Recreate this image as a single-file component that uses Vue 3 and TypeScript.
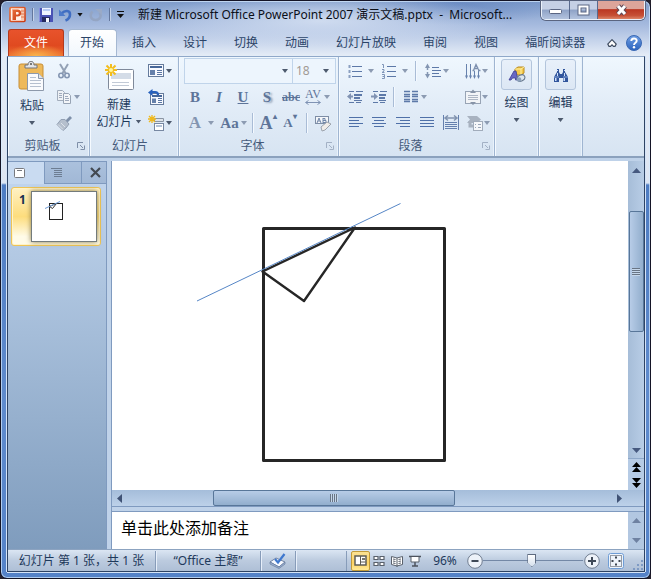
<script setup lang="ts">
import { ref } from 'vue'

const tabs: string[] = ['开始', '插入', '设计', '切换', '动画', '幻灯片放映', '审阅', '视图', '福昕阅读器']
const activeTab = ref('开始')
const zoom = ref(96)
const slider = ref(39)
</script>

<template>
  <div class="window">
    <header class="titlebar">
      <div class="quick">
        <svg class="app-logo" width="17" height="17" viewBox="0 0 17 17">
          <defs>
            <linearGradient id="logoG" x1="0" y1="0" x2="1" y2="1">
              <stop offset="0" stop-color="#e8703c" /><stop offset="1" stop-color="#c93a12" />
            </linearGradient>
          </defs>
          <rect x="1" y="1.500" width="15" height="14" rx="1" fill="#fff1e8" stroke="url(#logoG)" stroke-width="1.600" />
          <path d="M12 3h3v11h-3z" fill="#f7c9b2" />
          <path d="M12 5h3M12 8h3M12 11h3" stroke="#e07a50" />
          <path fill-rule="evenodd" fill="url(#logoG)" d="M3 3.500h5.500c5 0 5 7 0 7H7v3.500H3.500V4.500zM7 6v2.500h1.500c1.700 0 1.700-2.500 0-2.500z" />
        </svg>
        <i class="vbar"></i>
        <button class="plain" aria-label="保存">
          <svg width="14" height="14" viewBox="0 0 14 14">
            <path d="M0 0h14v14H1L0 13z" fill="#4a52b5" />
            <path d="M3 0h9v7H3z" fill="#eef3ff" /><path d="M4 1h7v2H4z" fill="#b8cbf4" />
            <path d="M3 9h8v5H3z" fill="#24285f" /><path d="M7 10h3v4H7z" fill="#f5f7ff" />
            <path d="M0 0h1v13H0z" fill="#8790df" />
          </svg>
        </button>
        <button class="plain undo" aria-label="撤消">
          <svg width="14" height="14" viewBox="0 0 14 14">
            <path d="M2.500 5.500C6 2 11 2 11 6.500c0 3-2 5-4.500 6" fill="none" stroke="#3f6dc2" stroke-width="2.600" />
            <path d="M0 1.500V8h6.500z" fill="#4c79ca" />
          </svg>
          <i class="caret black"></i>
        </button>
        <button class="plain redo" aria-label="重复" disabled>
          <svg width="14" height="14" viewBox="0 0 14 14">
            <path d="M3.500 3.500C0 7 2 12 6.500 12s6.500-4 4-7.500" fill="none" stroke="#94a5c3" stroke-width="2.500" />
            <path d="M6 1h7v6z" fill="#9aaac6" />
          </svg>
        </button>
        <i class="vbar"></i>
        <button class="plain" aria-label="自定义快速访问工具栏">
          <svg width="9" height="8" viewBox="0 0 9 8"><path d="M1 .5h7" stroke="#111" /><path d="M1 3h7L4.500 7z" fill="#111" /></svg>
        </button>
      </div>
      <h1>新建 Microsoft Office PowerPoint 2007 演示文稿.pptx&nbsp; -&nbsp; Microsoft...</h1>
      <div class="winbtns">
        <button aria-label="最小化"><svg width="13" height="12" viewBox="0 0 13 12"><rect x=".5" y="5.500" width="12" height="4" rx="1" fill="#fff" stroke="#5b6683" /></svg></button>
        <button aria-label="最大化"><svg width="13" height="12" viewBox="0 0 13 12"><rect x="2.500" y="2.500" width="8" height="7" fill="none" stroke="#5b6683" stroke-width="4" /><rect x="2.500" y="2.500" width="8" height="7" fill="none" stroke="#fff" stroke-width="2" /></svg></button>
        <button class="close" aria-label="关闭"><svg width="13" height="12" viewBox="0 0 13 12"><path d="M3 2l7 8M10 2l-7 8" stroke="#5d4654" stroke-width="5" /><path d="M3 2l7 8M10 2l-7 8" stroke="#fff" stroke-width="3" /></svg></button>
      </div>
    </header>

    <nav class="tabs">
      <button class="file">文件</button>
      <button v-for="t in tabs" :key="t" class="tab" :class="{ active: t === activeTab }" @click="activeTab = t">{{ t }}</button>
      <div class="tab-tools">
        <button class="plain" aria-label="功能区最小化">
          <svg width="10" height="8" viewBox="0 0 10 8"><path d="M5 .7L9.200 5 8 7.300H6.500L5 5.800 3.500 7.300H2L.8 5z" fill="#fff" stroke="#3f4c60" stroke-width="1.200" /></svg>
        </button>
        <button class="plain" aria-label="帮助">
          <svg width="16" height="16" viewBox="0 0 16 16">
            <defs><linearGradient id="helpG" x1="0" y1="0" x2="0" y2="1"><stop offset="0" stop-color="#6f9fe4" /><stop offset="1" stop-color="#2c63bd" /></linearGradient></defs>
            <circle cx="8" cy="8" r="7.500" fill="url(#helpG)" stroke="#3a69b4" />
            <path d="M5.300 6C5.300 2.600 10.700 2.700 10.700 5.800 10.700 7.800 8 7.600 8 10" fill="none" stroke="#fff" stroke-width="1.900" /><circle cx="8" cy="12.300" r="1.200" fill="#fff" />
          </svg>
        </button>
      </div>
    </nav>

    <main class="client">
      <section class="ribbon">
        <div class="group clipboard">
          <div class="content">
            <button class="big">
              <svg width="28" height="31" viewBox="0 0 28 31">
                <rect x="1" y="3" width="24" height="25" rx="2" fill="#eeb95a" stroke="#c78f37" />
                <path d="M7 7V4h3c0-5 6-5 6 0h3v3z" fill="#e3e5e8" stroke="#70757c" /><circle cx="13" cy="3" r="1" fill="#555" />
                <path d="M9.500 12.500h11l5 5v12h-16z" fill="#fafbfd" stroke="#8d99ab" /><path d="M20.500 12.500v5h5" fill="#dfe5ee" stroke="#8d99ab" />
                <path d="M12 16.500h6M12 19.500h11M12 22.500h11M12 25.500h11" stroke="#b6c0cf" />
              </svg>
              <span>粘贴</span><i class="caret"></i>
            </button>
            <div class="stack">
              <button class="split" aria-label="剪切"><svg width="16" height="16" viewBox="0 0 16 16"><path d="M4 1l6 10M12 1L6 11" stroke="#93a1b5" stroke-width="2" /><circle cx="5" cy="12.500" r="2.200" fill="none" stroke="#8496b2" stroke-width="1.600" /><circle cx="11" cy="12.500" r="2.200" fill="none" stroke="#8496b2" stroke-width="1.600" /></svg></button>
              <button class="split" aria-label="复制"><svg width="16" height="16" viewBox="0 0 16 16"><path d="M1.500 1.500h5l2 2v8h-7z" fill="#eef1f5" stroke="#a2adbc" /><path d="M7.500 4.500h5l2 2v8h-7z" fill="#f3f5f8" stroke="#98a4b5" /><path d="M3 4.500h3M3 6.500h3M3 8.500h3M9 7.500h3M9 9.500h4M9 11.500h4" stroke="#9faabc" /></svg><i class="caret dim"></i></button>
              <button class="split" aria-label="格式刷"><svg width="16" height="16" viewBox="0 0 16 16"><path d="M9 6l5-5 2 2-5 5z" fill="#7f90a9" /><path d="M5 4.500h4l4 4.500-3 4-3 2.500-6-6z" fill="#b5bfcd" stroke="#94a1b4" /><path d="M2 9.500l5 5M5 8l4 4" stroke="#dde3ea" /></svg></button>
            </div>
          </div>
          <footer><span>剪贴板</span><svg class="launch" width="8" height="8" viewBox="0 0 8 8"><path d="M.5 6V.5H6M3 3l3 3M7.500 3.500v4h-4" fill="none" stroke="#7e8fa8" /></svg></footer>
        </div>

        <div class="group slides">
          <div class="content">
            <button class="big">
              <svg width="31" height="31" viewBox="0 0 31 31">
                <rect x="4.500" y="7.500" width="25" height="20" rx="1" fill="#fff" stroke="#7f899a" /><path d="M7 11h20v6H7z" fill="#d4dce7" /><path d="M8 20.500h17M8 23.500h17" stroke="#c2cad6" />
                <path d="M7 2v12M1 8h12M2.500 3.500l9 9M11.500 3.500l-9 9" stroke="#f3bd1e" stroke-width="2" /><circle cx="7" cy="8" r="2" fill="#fff59b" />
              </svg>
              <span>新建</span><span class="with-caret">幻灯片 <i class="caret"></i></span>
            </button>
            <div class="stack">
              <button class="split" aria-label="版式"><svg width="16" height="16" viewBox="0 0 16 16"><rect x=".5" y="1.500" width="15" height="12" fill="#f8faff" stroke="#657b9c" /><path d="M2 4h12" stroke="#476799" stroke-width="2" /><path d="M2 7h5v5H2z" fill="#6580aa" /><path d="M9 7.500h5M9 9.500h5M9 11.500h5" stroke="#5a76a3" /></svg><i class="caret"></i></button>
              <button class="split" aria-label="重设"><svg width="16" height="16" viewBox="0 0 16 16"><rect x="2.500" y="4.500" width="13" height="11" fill="#f8faff" stroke="#657b9c" /><path d="M4 7h10" stroke="#476799" stroke-width="2" /><path d="M4 9.500h4V14H4z" fill="#6580aa" /><path d="M10 9.500h4M10 11.500h4M10 13.500h4" stroke="#5a76a3" /><path d="M3 3h4c2 0 3 1 3 3" fill="none" stroke="#2861bd" stroke-width="2.200" /><path d="M0 3.500L4.500 0v7z" fill="#2861bd" /></svg></button>
              <button class="split" aria-label="节"><svg width="16" height="16" viewBox="0 0 16 16"><path d="M6.500 3.500h9v3h-9z" fill="#dfe4ea" stroke="#8a95a4" /><rect x="6.500" y="8.500" width="9" height="7" fill="#fff" stroke="#7788a2" /><path d="M8 10h6v2H8z" fill="#b3c2d8" /><path d="M4 0v8M0 4h8M1 1l6 6M7 1L1 7" stroke="#f0b91c" stroke-width="1.300" /></svg><i class="caret"></i></button>
            </div>
          </div>
          <footer><span>幻灯片</span></footer>
        </div>

        <div class="group font">
          <div class="content rows">
            <div class="row combos">
              <label class="combo name"><select aria-label="字体名称"><option></option></select><i class="caret"></i></label>
              <label class="combo"><select aria-label="字号"><option>18</option></select><i class="caret"></i></label>
            </div>
            <div class="row">
              <button class="letter b">B</button><button class="letter i">I</button><button class="letter u">U</button><button class="letter s">S</button><button class="letter strike">abc</button>
              <button class="letter av" aria-label="字符间距"><span>AV</span><svg width="16" height="5" viewBox="0 0 16 5"><path d="M1 2.500h14M3.500 .5l-3 2 3 2M12.500 .5l3 2-3 2" fill="none" stroke="#7f93b4" /></svg></button><i class="caret dim"></i>
            </div>
            <div class="row">
              <button class="letter a">A</button><i class="caret dim wide"></i>
              <button class="letter aa">Aa</button><i class="caret dim"></i>
              <i class="sep"></i>
              <button class="letter grow">A<sup>▴</sup></button><button class="letter shrink">A<sup>▾</sup></button>
              <i class="sep"></i>
              <button class="plain clear" aria-label="清除所有格式"><svg width="17" height="17" viewBox="0 0 17 17"><rect x=".5" y="1.500" width="13" height="7" fill="#f5f7fa" stroke="#7e8ea6" /><path d="M2 8l2-5 2 5M3 6h2M8 3v5M8 3.500h2v2H8h3v2H8" fill="none" stroke="#7187a9" /><path d="M6 12l6-5 4 2-6 6-3 1z" fill="#f1ede9" stroke="#9ba2ac" /></svg></button>
            </div>
          </div>
          <footer><span>字体</span><svg class="launch" width="8" height="8" viewBox="0 0 8 8"><path d="M.5 6V.5H6M3 3l3 3M7.500 3.500v4h-4" fill="none" stroke="#a3b1c5" /></svg></footer>
        </div>

        <div class="group para">
          <div class="content rows">
            <div class="row">
              <button class="split wide" aria-label="项目符号"><svg width="16" height="16" viewBox="0 0 16 16"><path d="M5 3.500h10M5 8.500h10M5 13.500h10" stroke="#5d79a8" /><path d="M1.500 2h2v3h-2zM1.500 7h2v3h-2zM1.500 12h2v3h-2z" fill="#8ba0c1" /></svg><i class="caret dim"></i></button>
              <button class="split wide" aria-label="编号"><svg width="16" height="16" viewBox="0 0 16 16"><path d="M6 3.500h9M6 8.500h9M6 13.500h9" stroke="#5d79a8" /><path d="M1 1.500h1.500V5M1 6.500h2v1.500l-2 1.500h2.500M1 11.500h2.500v4H1M1.500 13.500h2" fill="none" stroke="#7f95b8" /></svg><i class="caret dim"></i></button>
              <i class="sep"></i>
              <button class="split" aria-label="行距"><svg width="16" height="16" viewBox="0 0 16 16"><path d="M2.500 3v4M2.500 9v4" stroke="#8496b2" stroke-width="1.500" /><path d="M0 5l2.500-4.500L5 5zM0 11l2.500 4.500L5 11z" fill="#8496b2" /><path d="M7 4.500h7M7 7.500h9M7 10.500h7M7 13.500h9" stroke="#5d79a8" /></svg><i class="caret dim"></i></button>
              <button class="split end" aria-label="文字方向"><svg width="16" height="16" viewBox="0 0 16 16"><path d="M1.500 1v13M5.500 1v13M9.500 8v6M13.500 8v6" stroke="#6782ad" /><path d="M0 12.500h3L1.500 16zM4 12.500h3L5.500 16zM8 12.500h3L9.500 16zM12 12.500h3L13.500 16z" fill="#6782ad" /><path d="M8.500 7.500l2.500-6 3 6M9.500 5.500h4M7.500 7.500h2M13 7.500h2.500" fill="none" stroke="#7d90af" stroke-width="1.300" /></svg><i class="caret dim"></i></button>
            </div>
            <div class="row icons">
              <button class="plain" aria-label="降低列表级别"><svg width="16" height="16" viewBox="0 0 16 16"><path d="M2 2.500h5M9 2.500h7M7 5.500h8M7 6.500h8M7 9.500h6M7 8.500h6M7 11.500h8M2 13.500h5M9 13.500h5" stroke="#5d79a8" /><path d="M0 7.500L4 4v7z" fill="#8093b3" /><path d="M3 7.500h3" stroke="#8093b3" stroke-width="2" /></svg></button>
              <button class="plain" aria-label="提高列表级别"><svg width="16" height="16" viewBox="0 0 16 16"><path d="M2 2.500h5M9 2.500h7M8 5.500h7M8 6.500h7M8 8.500h6M8 9.500h6M8 11.500h7M2 13.500h5M9 13.500h5" stroke="#5d79a8" /><path d="M7 7.500L3 4v7z" fill="#8093b3" /><path d="M0 7.500h4" stroke="#8093b3" stroke-width="2" /></svg></button>
              <i class="sep near"></i>
              <button class="split" aria-label="分栏"><svg width="16" height="16" viewBox="0 0 16 16"><path d="M1 2.500h6M1 5.500h6M1 7.500h6M1 10.500h6M1 12.500h6M9 2.500h6M9 5.500h6M9 7.500h6M9 10.500h6M9 12.500h6" stroke="#5d79a8" stroke-width="1.300" /></svg><i class="caret dim"></i></button>
              <button class="split end" aria-label="对齐文本"><svg width="16" height="16" viewBox="0 0 16 16"><rect x=".5" y="2.500" width="15" height="12" fill="#f2f4f7" stroke="#98a4b5" /><path d="M3 6.500h10M3 8.500h10M3 10.500h10" stroke="#adb6c4" /><path d="M5 4L8 .5 11 4zM5 13l3 3 3-3z" fill="#8794a8" /></svg><i class="caret dim"></i></button>
            </div>
            <div class="row icons">
              <button class="plain" aria-label="左对齐"><svg width="16" height="16" viewBox="0 0 16 16"><path d="M2 2.500h14M2 5.500h10M2 8.500h14M2 11.500h10" stroke="#4f70a8" /></svg></button>
              <button class="plain" aria-label="居中"><svg width="16" height="16" viewBox="0 0 16 16"><path d="M1 2.500h14M3 5.500h10M1 8.500h14M3 11.500h10" stroke="#4f70a8" /></svg></button>
              <button class="plain" aria-label="右对齐"><svg width="16" height="16" viewBox="0 0 16 16"><path d="M1 2.500h14M5 5.500h10M1 8.500h14M5 11.500h10" stroke="#4f70a8" /></svg></button>
              <button class="plain" aria-label="两端对齐"><svg width="16" height="16" viewBox="0 0 16 16"><path d="M1 2.500h14M1 5.500h14M1 8.500h14M1 11.500h14" stroke="#4f70a8" /></svg></button>
              <button class="plain" aria-label="分散对齐"><svg width="16" height="16" viewBox="0 0 16 16"><path d="M.5 0v15M15.500 0v15M2 7.500h12M2 9.500h12M2 11.500h12M2 13.500h12" stroke="#6580ae" /><path d="M2 3h12M5 .5L2 3l3 2.500M11 .5L14 3l-3 2.500" fill="none" stroke="#8294b0" stroke-width="1.500" /></svg></button>
              <button class="split end" aria-label="转换为 SmartArt"><svg width="16" height="16" viewBox="0 0 16 16"><path d="M0 1h10l4 3.500L10 8H0l3-3.500z" fill="#a8b2c0" /><path d="M3 6v5h3" stroke="#a8b2c0" stroke-width="3" fill="none" /><rect x="6.500" y="6.500" width="9" height="9" fill="#f5f7fa" stroke="#a1acbb" /><path d="M8 9.500h1M11 9.500h3M8 12.500h1M11 12.500h3" stroke="#9aa7ba" /></svg><i class="caret dim"></i></button>
            </div>
          </div>
          <footer><span>段落</span><svg class="launch" width="8" height="8" viewBox="0 0 8 8"><path d="M.5 6V.5H6M3 3l3 3M7.500 3.500v4h-4" fill="none" stroke="#a3b1c5" /></svg></footer>
        </div>

        <div class="group small">
          <button class="big">
            <b class="tile"><svg width="18" height="18" viewBox="0 0 18 18"><path d="M7 3l3-2h6v6l-3 2H7z" fill="#f4c94a" stroke="#b98b22" /><path d="M7 3h6v6M13 3l3-2" fill="none" stroke="#fff0a6" /><path d="M1 14L6 5h2l2 9H7.500v-2h-3L3 14z" fill="#6767c3" stroke="#3c3c93" stroke-width=".8" /><ellipse cx="13" cy="12" rx="4" ry="3" transform="rotate(-25 13 12)" fill="#dce6ef" stroke="#64768b" /><circle cx="11" cy="13.500" r="2.300" fill="#8ca1ba" /></svg></b>
            <span>绘图</span><i class="caret"></i>
          </button>
        </div>
        <div class="group small">
          <button class="big">
            <b class="tile"><svg width="18" height="18" viewBox="0 0 18 18"><path d="M5 3h2v3l1 2h2l1-2V3h2v3l3 5v5h-5v-4H7v4H2v-5l3-5z" fill="#31559c" /><path d="M3 12h1.500v3H3zM11.500 12H13v3h-1.500zM5 7h1v3H5zM12 7h1v3h-1zM5 4h1v1H5zM12 4h1v1h-1z" fill="#cfe0fa" /><path d="M2 11h5M11 11h5" stroke="#89a8dc" /></svg></b>
            <span>编辑</span><i class="caret"></i>
          </button>
        </div>
      </section>

      <section class="body">
        <aside class="outline">
          <div class="pane-tabs">
            <button class="pt on" aria-label="幻灯片"><svg width="12" height="10" viewBox="0 0 12 10"><rect x=".5" y=".5" width="10" height="9" rx="1" fill="#fff" stroke="#77797e" /><path d="M3 2.500h5" stroke="#77797e" /></svg></button>
            <button class="pt" aria-label="大纲"><svg width="12" height="10" viewBox="0 0 12 10"><path d="M0 .5h11M3 2.500h8M3 4.500h8M3 6.500h8M3 8.500h8" stroke="#6d7d92" /></svg></button>
            <button class="pt x" aria-label="关闭"><svg width="11" height="11" viewBox="0 0 11 11"><path d="M1 1l9 9M10 1l-9 9" stroke="#434952" stroke-width="2.200" /></svg></button>
          </div>
          <button class="thumb" aria-label="幻灯片 1">
            <b>1</b>
            <svg viewBox="0 0 66 51"><rect x=".5" y=".5" width="65" height="50" fill="#fff" stroke="#737b7c" /><rect x="18.500" y="12.500" width="13" height="16" fill="none" stroke="#222" /><path d="M18.500 15.500l7-3-4 5z" fill="none" stroke="#333" /><path d="M14 17.500l15-7" stroke="#6f9cd6" /></svg>
          </button>
        </aside>
        <div class="editor">
          <div class="stage">
            <svg class="slide" viewBox="112 161 516 329">
              <rect x="263.500" y="228.500" width="181" height="232" fill="none" stroke="#262626" stroke-width="3" stroke-linejoin="round" />
              <path d="M262.500 271.500L355 227.500 304 301z" fill="#fff" stroke="#262626" stroke-width="2.400" stroke-linejoin="round" />
              <path d="M197 301L400.500 203.500" stroke="#5686c6" />
            </svg>
            <div class="vscroll">
              <svg class="arrow" viewBox="0 0 9 5"><path d="M0 5l4.500-5L9 5z" /></svg>
              <div class="vtrack"><div class="vthumb"><i></i></div></div>
              <svg class="arrow" viewBox="0 0 9 5"><path d="M0 0h9L4.500 5z" /></svg>
              <div class="pager">
                <svg width="9" height="10" viewBox="0 0 9 10"><path d="M0 5l4.500-5L9 5zM0 10l4.500-5L9 10z" /></svg>
                <svg width="9" height="10" viewBox="0 0 9 10"><path d="M0 0h9L4.500 5zM0 5h9L4.500 10z" /></svg>
              </div>
            </div>
          </div>
          <div class="hscroll">
            <svg width="5" height="9" viewBox="0 0 5 9"><path d="M5 0v9L0 4.500z" fill="#3f5275" /></svg>
            <div class="htrack"><div class="hthumb"><i></i></div></div>
            <svg width="5" height="9" viewBox="0 0 5 9"><path d="M0 0v9l5-4.500z" fill="#3f5275" /></svg>
          </div>
          <div class="notes">
            <p>单击此处添加备注</p>
            <div class="nscroll">
              <svg class="arrow" viewBox="0 0 9 5"><path d="M0 5l4.500-5L9 5z" /></svg>
              <svg class="arrow" viewBox="0 0 9 5"><path d="M0 0h9L4.500 5z" /></svg>
            </div>
          </div>
        </div>
      </section>

      <footer class="status">
        <span class="cell count">幻灯片 第 1 张，共 1 张</span>
        <span class="cell theme">“Office 主题”</span>
        <span class="cell spell"><svg width="18" height="16" viewBox="0 0 18 16"><path d="M1 9l6-4 9 4-6 5z" fill="#f8faff" stroke="#7183a2" /><path d="M1 9v2l9 4.500 6-4.500V9l-6 5z" fill="#9eb3d3" stroke="#667b9e" stroke-width=".7" /><path d="M6 6l3 3.500L15.500 1" fill="none" stroke="#3f78ce" stroke-width="2.200" /></svg></span>
        <div class="views">
          <button class="on" aria-label="普通视图"><svg width="13" height="12" viewBox="0 0 13 12"><rect x="1" y="1" width="11" height="9" fill="#fff" stroke="#5e5d57" stroke-width="1.500" /><path d="M6.500 1v9M6.500 7h5" stroke="#5e5d57" /><path d="M8 3h3v2H8z" fill="#77766e" /></svg></button>
          <button aria-label="幻灯片浏览"><svg width="12" height="12" viewBox="0 0 12 12"><path d="M1 1.500h4v3H1zM7 1.500h4v3H7zM1 7.500h4v3H1zM7 7.500h4v3H7z" fill="#fff" stroke="#59606b" stroke-width="1.200" /></svg></button>
          <button aria-label="阅读视图"><svg width="12" height="12" viewBox="0 0 12 12"><path d="M.5 1.500L6 3l5.500-1.500v8L6 11 .5 9.500zM6 3v9" fill="#fff" stroke="#59606b" /><path d="M2 4l2.500.5M2 6l2.500.5M2 8l2.500.5M7.500 4.500L10 4M7.500 6.500L10 6M7.500 8.500L10 8" stroke="#59606b" /></svg></button>
          <button aria-label="幻灯片放映"><svg width="12" height="12" viewBox="0 0 12 12"><path d="M0 1.500h12M6 7v4M3 11h6" stroke="#4d535d" stroke-width="1.500" /><path d="M2 2v5h8V2" fill="#fff" stroke="#59606b" /></svg></button>
        </div>
        <output>{{ zoom }}%</output>
        <button class="round" aria-label="缩小"><svg width="16" height="16" viewBox="0 0 16 16"><circle cx="8" cy="8" r="7.300" fill="#edf2f9" stroke="#707d90" /><path d="M4.500 8h7" stroke="#3f4957" stroke-width="2" /></svg></button>
        <input v-model="slider" type="range" min="0" max="80" aria-label="显示比例" />
        <button class="round" aria-label="放大"><svg width="16" height="16" viewBox="0 0 16 16"><circle cx="8" cy="8" r="7.300" fill="#edf2f9" stroke="#707d90" /><path d="M4 8h8M8 4v8" stroke="#3f4957" stroke-width="2" /></svg></button>
        <button class="fit" aria-label="使幻灯片适应当前窗口"><svg width="16" height="16" viewBox="0 0 16 16"><rect x=".5" y=".5" width="15" height="15" rx="2" fill="#eef4fb" stroke="#6e9dd6" /><rect x="2.500" y="2.500" width="11" height="11" fill="none" stroke="#3d4550" stroke-dasharray="1 1" /><path d="M8 3v3M8 10v3M3 8h3M10 8h3M7 4.500h2M7 11.500h2M4.500 7v2M11.500 7v2" stroke="#3d4550" /></svg></button>
        <svg class="grip" width="12" height="12" viewBox="0 0 12 12"><path d="M9 1h2v2H9zM5 5h2v2H5zM9 5h2v2H9zM1 9h2v2H1zM5 9h2v2H5zM9 9h2v2H9z" fill="#7e9ac4" /></svg>
      </footer>
    </main>
  </div>
</template>

<style>
body { background: #25202c; }
</style>

<style scoped>
* { box-sizing: border-box; }
button { font: inherit; color: inherit; border: 0; background: none; padding: 0; }
svg { display: block; flex: none; }
i { display: block; flex: none; }

.window {
  display: flex; flex-direction: column; min-height: 100vh;
  padding: 0 5px 6px 6px; border: 1px solid #141426; border-radius: 7px;
  font: 12px/16px "Noto Sans", "Noto Sans CJK SC", sans-serif; color: #1e395b;
  background:
    radial-gradient(ellipse 190px 26px at 320px 20px, rgba(215, 226, 243, .85), transparent),
    radial-gradient(ellipse 110px 20px at 455px 4px, rgba(80, 118, 184, .45), transparent),
    linear-gradient(180deg, #7e9bca 0, #a9bde0 26px, #e3ebf6 54px, #dde5f2 182px, #4e7cc2 184px, #5f8bcd 400px, #5482c8 100%);
  box-shadow: inset 0 0 0 1px rgba(215, 235, 255, .7);
}

.titlebar { display: flex; align-items: flex-start; height: 27px; }
.quick { display: flex; align-items: center; gap: 6px; width: 131px; height: 27px; padding-left: 2px; flex: none; }
.quick .plain { flex: none; }
.undo { display: flex; align-items: center; gap: 4px; }
.vbar { width: 1px; height: 13px; background: #63779d; box-shadow: 1px 0 #c5d3e9; }
h1 { flex: 1; min-width: 0; margin: 0; font-size: 12px; line-height: 27px; font-weight: 400; color: #0b0f18; white-space: nowrap; overflow: hidden; text-overflow: clip; }
.winbtns { display: flex; flex: none; height: 19px; border: 1px solid #eaf1fb; border-top: 0; border-radius: 0 0 5px 5px; overflow: hidden; box-shadow: 0 0 0 1px #5a6580; }
.winbtns button { display: grid; place-items: center; width: 28px; border-right: 1px solid #596a8e; background: linear-gradient(#c5d0e5 0 45%, #8ea2c6 50%, #b3c3de); }
.winbtns .close { width: 46px; border: 0; background: linear-gradient(#dda59a 0 42%, #bb3722 48%, #c64f35 80%, #dc8568); }

.tabs { display: flex; align-items: flex-end; height: 28px; color: #2b4468; }
.file { flex: none; width: 56px; height: 27px; margin: 0 4px 0 1px; color: #fff; border: 1px solid #b4391d; border-bottom: 0; border-radius: 3px 3px 0 0; background: radial-gradient(ellipse 30px 12px at 50% 100%, #f9b44c, transparent), linear-gradient(#e8532c, #e04a20 60%, #ee7030); }
.tab { flex: none; height: 27px; padding: 0 13px 0 12px; border: 1px solid transparent; border-bottom: 0; white-space: nowrap; }
.tab.active { padding: 0 12px 0 11px; margin-right: 2px; border-color: #a5b8d2; border-radius: 4px 4px 0 0; background: linear-gradient(#fff, #f1f7fd); }
.tab-tools { display: flex; align-items: center; gap: 9px; height: 27px; margin-left: auto; padding-right: 3px; }

.client { flex: 1; display: flex; flex-direction: column; min-height: 0; border: 1px solid #2e4364; border-top-color: #8fa8c9; box-shadow: 0 1px #d5e4f8, -1px 0 #d5e4f8, 1px 0 #d5e4f8; background: #b9cce4; }

.ribbon { display: flex; height: 101px; flex: none; background: linear-gradient(#eff7fe, #e3edf8 45%, #d7e4f2); border-bottom: 2px solid #8ba1bd; }
.group { display: flex; flex-direction: column; flex: none; border-right: 1px solid #9fb5d1; box-shadow: inset 1px 0 #f5faff, inset -1px 0 #e9f2fb; }
.clipboard { width: 82px; }
.slides { width: 89px; }
.font { width: 160px; }
.para { width: 156px; }
.small { width: 44px; align-items: center; padding-top: 2px; }
.group footer { display: flex; align-items: center; height: 20px; padding-right: 4px; font-size: 12px; color: #44597a; }
.group footer span { flex: 1; text-align: center; }
.slides footer { padding-right: 8px; }
.content { flex: 1; display: flex; padding-top: 1px; }
.big { display: flex; flex-direction: column; align-items: center; line-height: 17px; white-space: nowrap; }
.clipboard .big { width: 48px; padding-top: 3px; }
.clipboard .big span { margin: 5px 0 7px; }
.slides .big { width: 58px; padding-top: 4px; }
.slides .big span { margin-top: 0; }
.slides .big svg { margin-bottom: 3px; }
.with-caret { display: flex; align-items: center; gap: 3px; }
.tile { display: grid; place-items: center; width: 31px; height: 31px; border: 1px solid #b3c5dc; border-radius: 3px; background: linear-gradient(#e8f0fa, #dce7f4); margin-bottom: 4px; }
.small .big .caret { margin-top: 7px; }
.caret { width: 6px; height: 4px; background: #4d5a6e; clip-path: polygon(0 0, 100% 0, 50% 100%); }
.caret.dim { background: #8c9bb2; }
.caret.black { background: #111; }
.stack { display: flex; flex-direction: column; }
.split { display: flex; align-items: center; gap: 2px; height: 26px; }
.split.wide { width: 34px; gap: 5px; }
.split.end { margin-left: auto; gap: 1px; }

.rows { flex-direction: column; }
.row { display: flex; align-items: center; height: 26px; }
.font .row { padding-left: 4px; }
.combo { display: flex; align-items: center; width: 44px; height: 26px; border: 1px solid #c0d4ea; margin-left: -1px; padding-right: 6px; background: #edf5fd; }
.combo.name { width: 109px; margin-left: 1px; padding-right: 4px; }
.combo select { flex: 1; min-width: 0; height: 22px; appearance: none; border: 0; padding: 0 3px; background: none; font: 12px/16px "Noto Sans", sans-serif; color: #a19a94; }
.letter { width: 24px; text-align: center; font: 15px/20px "Liberation Serif", serif; color: #5d7499; }
.b { font-weight: 700; }
.i { font-style: italic; font-weight: 700; }
.u { text-decoration: underline; font-weight: 700; }
.s { font-weight: 700; text-shadow: 2px 1px 2px #8d9db4; }
.strike { font-size: 12px; font-weight: 700; text-decoration: line-through; }
.av { display: flex; flex-direction: column; align-items: center; width: 20px; margin-right: 1px; font-size: 12px; line-height: 11px; }
.a { font-size: 17px; font-weight: 700; color: #8395b1; }
.caret.wide { margin: 0 4px 0 1px; }
.aa { width: 23px; font-size: 15px; font-weight: 700; }
.sep { width: 1px; height: 20px; margin: 0 9px 0 0; background: #a9bcd6; box-shadow: 1px 0 #f4f9ff; }
.font .sep { margin: 0 4px 0 5px; }
.grow, .shrink { display: flex; justify-content: center; width: 22px; font-size: 18px; font-weight: 700; }
.shrink { font-size: 13px; }
.letter sup { font-size: 8px; line-height: 8px; }
.clear { margin-left: 4px; }
.para .row { padding: 0 6px 0 8px; }
.icons { gap: 8px; }
.sep.near { margin: 0 1px 0 -2px; }

.body { flex: 1; display: flex; min-height: 0; padding-top: 3px; background: #bfd2e9; }
.outline { width: 99px; flex: none; border: 1px solid #7f9abf; border-left: 0; border-bottom: 0; background: linear-gradient(#c3d7ef, #7f9cbd); }
.pane-tabs { display: flex; height: 22px; }
.pt { display: grid; place-items: center; width: 37px; border: 1px solid #7f9abf; border-width: 0 1px 1px 0; background: linear-gradient(#abc1dd, #a1b8d6); }
.pt.on { width: 37px; padding-right: 13px; border-bottom: 0; background: #c9dbf1; }
.pt:nth-child(2) { padding-right: 13px; }
.pt.x { flex: 1; padding-left: 3px; border-right: 0; }
.thumb { display: flex; gap: 6px; width: 90px; height: 59px; margin: 3px 0 0 3px; padding: 3px 3px 3px 7px; border: 1px solid #efc455; border-radius: 3px; text-align: left; background: linear-gradient(#fff1c4, #fddd7d 50%, #fffbe8 85%); box-shadow: inset 0 0 0 1px #fff3c8; }
.thumb b { width: 6px; line-height: 18px; color: #172e50; }
.thumb svg { width: 66px; height: 51px; box-shadow: 0 0 5px #8c7c48; }

.editor { flex: 1; min-width: 0; display: flex; flex-direction: column; margin-left: 4px; border-left: 1px solid #7f9abf; }
.stage { flex: 1; display: flex; min-height: 0; background: #fff; }
.slide { flex: 1 1 0; width: 0; min-width: 0; height: 100%; }
.vscroll { display: flex; flex-direction: column; align-items: center; width: 16px; padding-top: 7px; background: linear-gradient(90deg, #a6bdd8, #b8cde6); }
.arrow { width: 9px; height: 5px; fill: #46597f; }
.vtrack { flex: 1; width: 15px; padding-top: 38px; }
.vthumb, .hthumb { display: grid; place-items: center; border: 1px solid #587699; border-radius: 2px; background: linear-gradient(90deg, #b7cce7, #92aecd); }
.vthumb { height: 44%; min-height: 121px; }
.vthumb i { width: 8px; height: 8px; background: repeating-linear-gradient(#697585 0 1px, #c5d7eb 1px 2px); }
.pager { display: flex; flex-direction: column; align-items: center; justify-content: center; gap: 6px; width: 16px; height: 32px; margin-top: 5px; border-top: 1px solid #8ea8c9; background: #b6cbe5; }
.hscroll { display: flex; align-items: center; height: 17px; padding: 0 22px 0 5px; border-bottom: 1px solid #7f9abf; background: linear-gradient(#a5bdda, #bdd1e9); }
.htrack { flex: 1; padding: 0 32% 0 18%; }
.hthumb { height: 16px; background: linear-gradient(#b7cce7, #92aecd); }
.hthumb i { width: 8px; height: 8px; background: repeating-linear-gradient(90deg, #697585 0 1px, #c5d7eb 1px 2px); }
.notes { display: flex; height: 38px; margin-top: 4px; border-top: 1px solid #7f9abf; background: #fff; }
.notes p { flex: 1; margin: 0; padding: 4px 9px; font-size: 16px; line-height: 24px; color: #000; }
.nscroll { display: flex; flex-direction: column; justify-content: space-between; align-items: center; width: 16px; padding: 6px 0; background: #b2c7e1; }
.nscroll .arrow { fill: #6e81a1; }

.status { display: flex; align-items: center; height: 22px; flex: none; border-top: 1px solid #8ca3c0; background: linear-gradient(#dbe6f3, #bccbdf 50%, #aebfd6); white-space: nowrap; }
.cell { display: flex; align-items: center; justify-content: center; height: 20px; border-right: 1px solid #879cb9; box-shadow: 1px 0 #e7effa; }
.count { width: 148px; }
.theme { width: 105px; }
.spell { width: 35px; }
.views { display: flex; align-items: center; margin-left: auto; padding-left: 4px; border-left: 1px solid #879cb9; }
.views button { display: grid; place-items: center; width: 18px; height: 20px; }
.views .on { width: 19px; border: 1px solid #c29b39; border-radius: 2px; background: linear-gradient(#fbe295, #fdd364 60%, #ffea98); }
output { width: 42px; text-align: center; }
.round { margin: 0 0 0 1px; }
.status input { width: 100px; height: 16px; margin: 0; appearance: none; background: linear-gradient(#7488a6, #7488a6) center / 100% 1px no-repeat; }
.status input::-webkit-slider-thumb { appearance: none; width: 9px; height: 13px; background: linear-gradient(#fff, #d6e0ed) content-box, #5e6b80; padding: 1px; clip-path: polygon(0 0, 100% 0, 100% 65%, 50% 100%, 0 65%); }
.fit { margin: 0 8px; }
.grip { align-self: flex-end; }
</style>
